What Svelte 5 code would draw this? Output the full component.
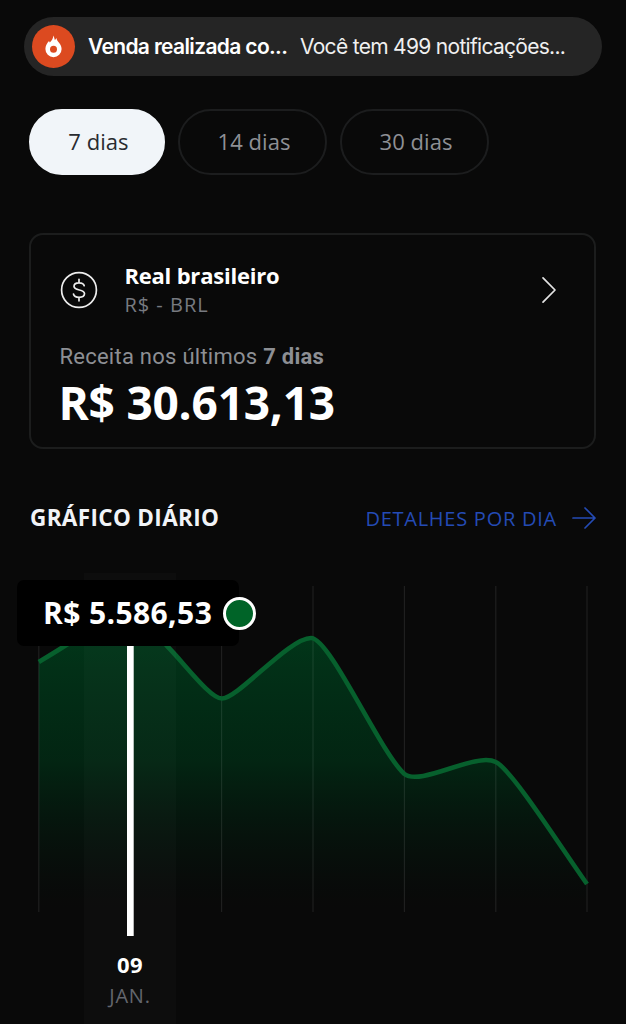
<script>
  const periods = [
    { days: 7, width: 136 },
    { days: 14, width: 149 },
    { days: 30, width: 149 }
  ];
  let selected = $state(7);
  const gridLines = [38.8, 221.6, 313, 404.4, 495.8, 587];
  const curve =
    'M38.8 90 C52 82 62 76 74 68 C94 55 112 40 130 40 C144 40 155 61 167 74 C185 92 210 126.5 222 126.5 C238 126.5 289 66 311 66 C330 66 380 180 404.4 202 C419 213 462 188 486 188 C490 188 493 188.500 495.800 190 C512 198 560 274 587 312';
</script>

<main>
  <div class="notice">
    <span class="logo">
      <svg width="43" height="43" viewBox="0 0 43 43">
        <path d="M21.300 10.500c.8 1.500 1.200 2.900 1.500 4.500.8-.6 1.200-1.300 1.600-2.100.3 1.300.8 2.500 1.600 3.700 2.100 2.300 3.600 4.500 3.600 7.500a8.100 8.100 0 0 1-16.200 0c0-3.300 1.500-5.700 3.600-8.100l.8 1.500c2-1.900 3.300-3.900 3.500-7z" fill="#fff" />
        <circle cx="21.500" cy="24.200" r="3.500" fill="#dc4a20" />
      </svg>
    </span>
    <span class="title">Venda realizada co...</span>
    <span class="message">Você tem 499 notificações...</span>
  </div>

  <nav>
    {#each periods as period}
      <button
        class:active={selected === period.days}
        style="width: {period.width}px"
        onclick={() => (selected = period.days)}
      >{period.days} dias</button>
    {/each}
  </nav>

  <section class="card">
    <div class="currency">
      <svg width="38" height="38" viewBox="0 0 38 38" fill="none" stroke="#ededed" stroke-width="1.700" stroke-linecap="round" stroke-linejoin="round">
        <circle cx="19" cy="19" r="17.400" />
        <path d="M24.200 14.700c-.5-2-2.300-2.900-5.200-2.900-3.100 0-5 1.300-5 3.500 0 5 10.500 2.400 10.500 7.300 0 2.300-2 3.700-5.400 3.700-3.200 0-5.100-1.100-5.600-3.300M19 8.300v3.500M19 26.300v3.500" />
      </svg>
      <div class="names">
        <strong>Real brasileiro</strong>
        <span>R$ - BRL</span>
      </div>
      <svg class="chevron" width="16" height="28" viewBox="0 0 16 28" fill="none" stroke="#e4e4e4" stroke-width="1.700" stroke-linecap="round" stroke-linejoin="round">
        <path d="M2 1.800 14 14 2 26.200" />
      </svg>
    </div>
    <p class="caption">Receita nos últimos <b>7 dias</b></p>
    <p class="amount">R$ 30.613,13</p>
  </section>

  <header>
    <h2>GRÁFICO DIÁRIO</h2>
    <span class="details">DETALHES POR DIA</span>
    <svg width="24" height="22" viewBox="0 0 24 22" fill="none" stroke="#244bb5" stroke-width="1.700" stroke-linecap="round" stroke-linejoin="round">
      <path d="M1 11h22M13 1l10 10-10 10" />
    </svg>
  </header>

  <section class="chart">
    <svg width="626" height="364" viewBox="0 0 626 364">
      <defs>
        <linearGradient id="area" gradientUnits="userSpaceOnUse" x1="0" y1="40" x2="0" y2="338">
          <stop offset="0" stop-color="#00401c" stop-opacity=".9" />
          <stop offset=".2" stop-color="#00381a" stop-opacity=".82" />
          <stop offset=".5" stop-color="#003016" stop-opacity=".72" />
          <stop offset=".85" stop-color="#002010" stop-opacity=".2" />
          <stop offset="1" stop-color="#001008" stop-opacity="0" />
        </linearGradient>
      </defs>
      <path d="{curve} V340 H38.800 Z" fill="url(#area)" />
      {#each gridLines as x}
        <line x1={x} x2={x} y1="14" y2="340" stroke="#fff" stroke-opacity=".09" stroke-width="1.200" />
      {/each}
      <path d={curve} fill="none" stroke="#07602d" stroke-width="4.600" />
      <rect x="84" y="1" width="92" height="363" fill="#fff" fill-opacity=".018" />
      <rect x="127" y="70" width="6.700" height="294" fill="#fff" />
    </svg>
    <div class="day">
      <strong>09</strong>
      <span>JAN.</span>
    </div>
    <div class="tooltip">
      <span>R$ 5.586,53</span>
      <i></i>
    </div>
  </section>
</main>

<style>
  :global(body) { margin: 0; background: #090909; }
  main {
    box-sizing: border-box;
    width: 626px;
    height: 1024px;
    padding-top: 17px;
    overflow: hidden;
    background: #090909;
    color: #fff;
    font-family: "Open Sans", "Noto Sans", sans-serif;
    white-space: nowrap;
  }
  p, h2 { margin: 0; }
  svg { display: block; flex: none; }
  .notice {
    box-sizing: border-box;
    display: flex;
    align-items: center;
    width: 578px;
    height: 59px;
    margin-left: 24px;
    padding-left: 8px;
    border-radius: 30px;
    background: #252525;
    font-family: Inter, sans-serif;
    font-size: 21px;
    line-height: 30px;
  }
  .logo {
    width: 43px;
    height: 43px;
    border-radius: 50%;
    background: #dc4a20;
  }
  .title { width: 212px; margin-left: 13px; font-weight: 600; letter-spacing: -0.65px; }
  .message { color: #f0f0f0; letter-spacing: -0.7px; }
  nav { display: flex; gap: 13px; margin: 33px 0 0 29px; }
  button {
    box-sizing: border-box;
    height: 66px;
    padding: 0 0 3px 3px;
    border: 2px solid #1c1d1e;
    border-radius: 33px;
    background: transparent;
    color: #8e9095;
    font-family: inherit;
    font-size: 22px;
    font-weight: 400;
    letter-spacing: 0.05px;
  }
  button.active { border-color: #f1f5f9; background: #f1f5f9; color: #292b30; }
  .card {
    box-sizing: border-box;
    width: 567px;
    height: 216px;
    margin: 58px 0 0 29.4px;
    padding: 25px 28px 0;
    border: 2px solid #1c1d1d;
    border-radius: 14px;
  }
  .currency { display: flex; align-items: center; height: 60px; padding-left: 1px; }
  .names { display: flex; flex-direction: column; flex: 1; margin-left: 26px; }
  .names strong { font-size: 22px; line-height: 30px; font-weight: 700; letter-spacing: -0.2px; }
  .names span { color: #777a80; font-size: 20px; line-height: 30px; letter-spacing: 1px; }
  .chevron { margin-right: 9px; }
  .caption { margin-top: 21px; color: #8d8f94; font: 400 22px/32px Roboto, sans-serif; letter-spacing: 0.26px; }
  .amount { margin: 1px 0 0 -1px; font-size: 46px; line-height: 56px; font-weight: 700; letter-spacing: -0.2px; }
  header { display: flex; align-items: center; height: 40px; margin: 49px 30px 0 30px; }
  h2 { flex: 1; padding-bottom: 1px; font-size: 22.5px; line-height: 30px; font-weight: 700; letter-spacing: 0.35px; color: #f1f3f7; }
  .details { margin-right: 15px; padding-top: 1px; color: #244bb5; font-size: 20px; line-height: 30px; letter-spacing: 0.75px; }
  .chart { position: relative; height: 452px; margin-top: 34px; }
  .day {
    display: flex;
    flex-direction: column;
    width: 92px;
    height: 88px;
    margin-left: 84px;
    padding-top: 13px;
    box-sizing: border-box;
    background: #0d0d0d;
    text-align: center;
  }
  .day strong { font-size: 22px; line-height: 31px; font-weight: 700; letter-spacing: 0.4px; }
  .day span { color: #63666d; font-size: 20px; line-height: 31px; letter-spacing: 0.8px; }
  .tooltip {
    position: absolute;
    left: 17px;
    top: 8px;
    display: flex;
    align-items: center;
    box-sizing: border-box;
    width: 222px;
    height: 66px;
    padding-left: 26px;
    border-radius: 7px;
    background: #000;
  }
  .tooltip span { width: 180px; flex: none; font-size: 30px; line-height: 40px; font-weight: 700; letter-spacing: 0.4px; }
  .tooltip i {
    box-sizing: border-box;
    flex: none;
    width: 33px;
    height: 33px;
    border: 3px solid #fff;
    border-radius: 50%;
    background: #006428;
  }
</style>
